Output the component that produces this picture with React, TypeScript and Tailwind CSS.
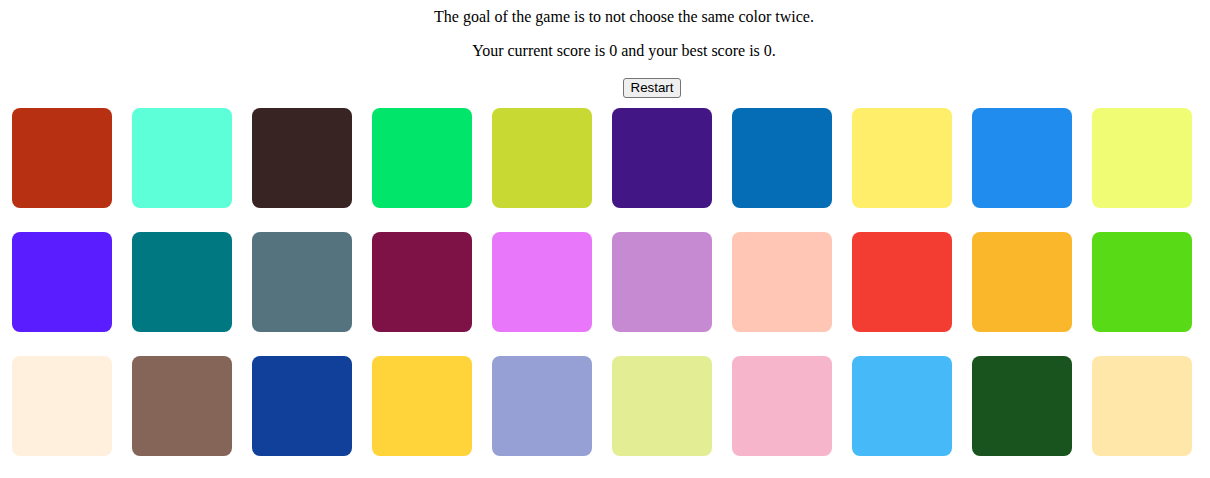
import React from "react";

const colors = [
  "#B83012", "#5CFFD7", "#372423", "#02E56B", "#C8D933", "#421684", "#056DB5", "#FFEE6A", "#208CEE", "#F0FD74",
  "#591DFF", "#007882", "#55737F", "#7E1146", "#E877FA", "#C68AD3", "#FFC6B6", "#F43D32", "#FBB72C", "#59DA17",
  "#FFF0DD", "#846558", "#104099", "#FFD33A", "#96A0D4", "#E2ED94", "#F7B5CB", "#46BAF8", "#19541F", "#FFE7AA",
];

export default function App() {
  return (
    <div className="w-[1210px] h-[478px] bg-white text-black" style={{ fontFamily: '"Liberation Serif", "Times New Roman", serif' }}>
      <div className="flex flex-col items-center pt-[8px] pl-[38px]">
        <p className="text-[16px] leading-[18px]">The goal of the game is to not choose the same color twice.</p>
        <p className="text-[16px] leading-[18px] mt-[16px]">Your current score is 0 and your best score is 0.</p>
      </div>
      <div className="flex pl-[623px] mt-[18px]">
        <button
          className="h-[20px] w-[58px] text-[13.33px] leading-[16px] bg-[#efefef] border border-[#767676] rounded-[3px] text-black"
          style={{ fontFamily: '"Liberation Sans", Arial, sans-serif' }}
        >
          Restart
        </button>
      </div>
      <div className="grid grid-cols-[repeat(10,100px)] gap-x-[20px] gap-y-[24px] pl-[12px] mt-[10px]">
        {colors.map((c, i) => (
          <div key={i} className="w-[100px] h-[100px] rounded-[8px]" style={{ backgroundColor: c }} />
        ))}
      </div>
    </div>
  );
}
